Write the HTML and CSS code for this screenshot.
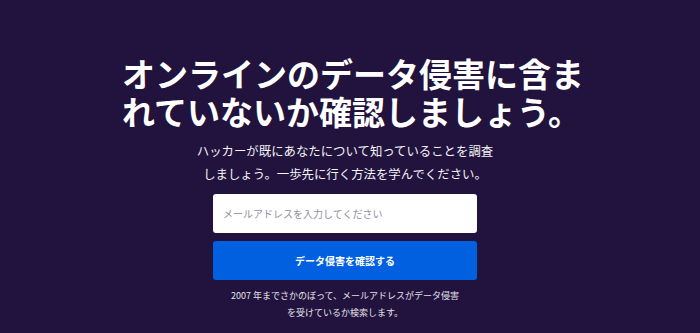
FILE: index.html
```html
<!DOCTYPE html>
<html lang="ja">
<head>
  <meta charset="UTF-8">
  <meta name="viewport" content="width=device-width, initial-scale=1">
  <title>Monitor</title>
  <link rel="stylesheet" href="styles.css">
</head>
<body>
  <main class="hero">
    <h1 class="headline">オンラインのデータ侵害に含まれていないか確認しましょう。</h1>
    <p class="lead">ハッカーが既にあなたについて知っていることを調査しましょう。一歩先に行く方法を学んでください。</p>
    <form class="scan-form">
      <input type="email" class="email-input" placeholder="メールアドレスを入力してください">
      <button type="submit" class="btn">データ侵害を確認する</button>
    </form>
    <p class="note">2007 年までさかのぼって、メールアドレスがデータ侵害を受けているか検索します。</p>
  </main>
</body>
</html>
```

FILE: styles.css
```css
* {
  margin: 0;
  padding: 0;
  box-sizing: border-box;
  font-family: "Noto Sans CJK JP", "Noto Sans", sans-serif;
}

body {
  background: #21133d;
  color: #fff;
  height: 100vh;
  overflow: hidden;
}

.hero {
  display: flex;
  flex-direction: column;
  align-items: center;
  padding: 54px 10px 0 0;
}

.headline {
  width: 490px;
  padding-left: 22px;
  font-size: 33px;
  line-height: 38px;
  font-weight: bold;
  color: #fff;
}

.lead {
  margin-top: 10px;
  width: 305px;
  font-size: 12.4px;
  line-height: 22.5px;
  text-align: center;
  color: #f4f3f7;
}

.scan-form {
  margin-top: 9px;
  width: 264px;
  display: flex;
  flex-direction: column;
  gap: 8px;
}

.email-input {
  height: 39px;
  padding: 0 10px;
  border: none;
  border-radius: 3px;
  background: #fff;
  font-size: 10px;
  outline: none;
}

.email-input::placeholder {
  color: #8f8f9d;
}

.btn {
  height: 39px;
  border: none;
  border-radius: 3px;
  background: #0060df;
  color: #fff;
  font-size: 10px;
  font-weight: bold;
  cursor: pointer;
}

.note {
  margin-top: 7px;
  width: 236px;
  font-size: 9px;
  line-height: 17px;
  text-align: center;
  color: #e4e2ea;
}
```
